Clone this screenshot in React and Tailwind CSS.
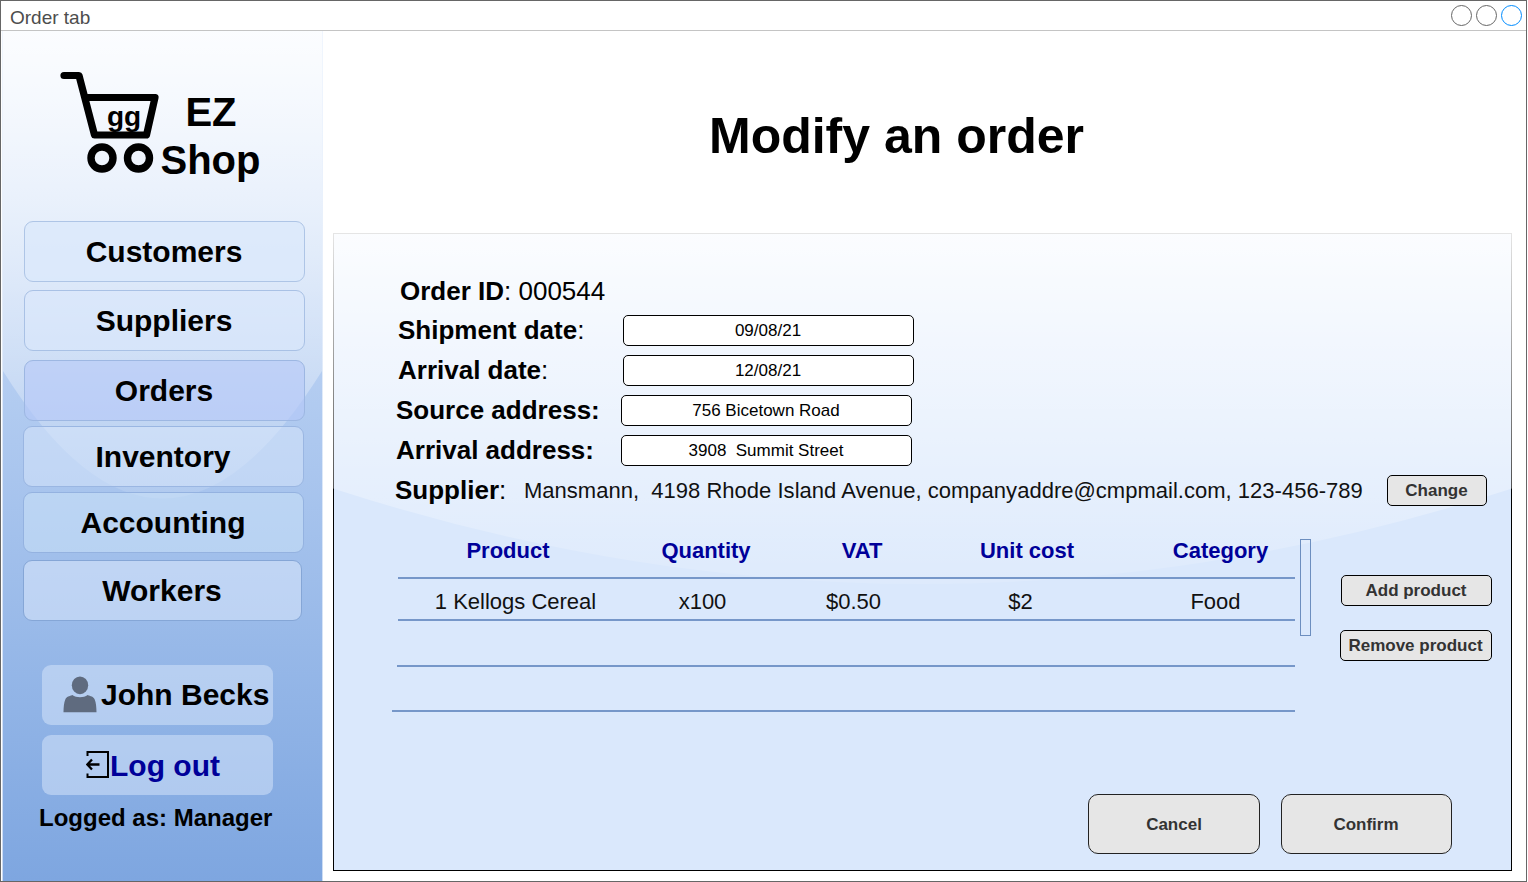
const NAV = [
  { label: "Customers", box: "ml-[21px] w-[281px] h-[61px] bg-[#dbe9fb]/80 border-[#aec5e6] pr-px" },
  { label: "Suppliers", box: "ml-[21px] w-[281px] h-[61px] mt-2 bg-[#dae8fc]/60 border-[#a9c1e5] pr-px" },
  { label: "Orders", box: "ml-[21px] w-[281px] h-[61px] mt-[9px] bg-[#b5c8f8]/60 border-[#9db7e2] pr-px" },
  { label: "Inventory", box: "ml-5 w-[281px] h-[61px] mt-[5px] bg-[#dae8fc]/50 border-[#9ab6e2] pr-px" },
  { label: "Accounting", box: "ml-5 w-[281px] h-[61px] mt-[5px] bg-[#d0e6fa]/50 border-[#94b2e0] pr-px" },
  { label: "Workers", box: "ml-5 w-[279px] h-[61px] mt-[7px] bg-[#dae8fc]/55 border-[#85a6d6] pr-px" },
];

const FIELDS = [
  { label: "Shipment date", colon: ":", value: "09/08/21", row: "pl-[64px]", labelBox: "w-[225px]" },
  { label: "Arrival date", colon: ":", value: "12/08/21", row: "pl-[64px]", labelBox: "w-[225px]" },
  { label: "Source address:", colon: "", value: "756 Bicetown Road", row: "pl-[62px]", labelBox: "w-[225px]" },
  { label: "Arrival address:", colon: "", value: "3908  Summit Street", row: "pl-[62px]", labelBox: "w-[225px]" },
];

const HEADERS = [
  { text: "Product", box: "w-[220px]" },
  { text: "Quantity", box: "w-[176px]" },
  { text: "VAT", box: "w-[136px]" },
  { text: "Unit cost", box: "w-[194px]" },
  { text: "Category", box: "w-[193px]" },
];

const CELLS = [
  { text: "1 Kellogs Cereal", box: "w-[235px]" },
  { text: "x100", box: "w-[139px]" },
  { text: "$0.50", box: "w-[163px]" },
  { text: "$2", box: "w-[171px]" },
  { text: "Food", box: "w-[219px]" },
];

function Glass({ id, d, viewBox, className }) {
  return (
    <svg className={className} viewBox={viewBox} preserveAspectRatio="none" aria-hidden="true">
      <defs>
        <linearGradient id={id} x1="0" y1="0" x2="0" y2="1">
          <stop offset="0" stopColor="#fff" stopOpacity="0.9" />
          <stop offset="1" stopColor="#fff" stopOpacity="0.1" />
        </linearGradient>
      </defs>
      <path d={d} fill={`url(#${id})`} />
    </svg>
  );
}

function Logo() {
  return (
    <div className="flex h-[190px] shrink-0 font-bold">
      <svg className="ml-[55px] mt-[39px] h-[110px] w-[104px] shrink-0" viewBox="58 70 104 110" fill="none">
        <path
          d="M64 75.5H79L94.5 135H146.5L155 97.5H86"
          stroke="#000"
          strokeWidth="7.2"
          strokeLinecap="round"
          strokeLinejoin="round"
        />
        <circle cx="102" cy="158" r="11" stroke="#000" strokeWidth="7.4" />
        <circle cx="138.5" cy="158" r="11" stroke="#000" strokeWidth="7.4" />
        <text x="107" y="126" fontSize="28" fontWeight="700" fill="#000">gg</text>
      </svg>
      <div className="-ml-[3px] mt-[57px] w-[103px] shrink-0 text-center text-[40px] leading-[48px]">
        <div className="pl-px">EZ</div>
        <div>Shop</div>
      </div>
    </div>
  );
}

function Sidebar() {
  return (
    <aside className="relative ml-px h-[850px] w-[321px] shrink-0 border-x border-white/60 bg-linear-to-b from-[#dae8fc] to-[#7ea6e0]">
      <Glass
        id="side-glass"
        className="absolute inset-0 h-full w-full"
        viewBox="0 0 320 851"
        d="M0 0V340.4Q160 595.7 320 340.4V0Z"
      />
      <div className="relative flex h-full flex-col">
        <Logo />
        {NAV.map((n) => (
          <button
            key={n.label}
            className={`${n.box} flex shrink-0 items-center justify-center rounded-[9px] border text-[30px] leading-none font-bold`}
          >
            {n.label}
          </button>
        ))}
        <button className="mt-11 ml-[39px] flex h-[60px] w-[231px] shrink-0 items-center rounded-[9px] bg-[#dae8fc]/50 pl-[21px] text-[30px] leading-none font-bold whitespace-nowrap">
          <svg className="-mt-[2px] h-[37px] w-[34px] shrink-0" viewBox="0 0 34 37" fill="#5f6b7f">
            <ellipse cx="17" cy="9.3" rx="8.2" ry="8.9" />
            <path d="M.5 36.3C.6 31 1 26.500 2.300 23.500C3.500 20.500 6.500 20.300 9.300 19C13.500 21.900 20.500 21.900 24.700 19C27.500 20.300 30.500 20.500 31.700 23.500C33 26.500 33.400 31 33.500 36.300Z" />
          </svg>
          <span className="ml-1">John Becks</span>
        </button>
        <button className="mt-[10px] ml-[39px] flex h-[60px] w-[231px] shrink-0 items-center rounded-[9px] bg-[#dae8fc]/50 pl-11 text-[30px] leading-none font-bold whitespace-nowrap text-[#000099]">
          <svg className="-mt-px h-[27px] w-[23px] shrink-0" viewBox="0 0 23 27" fill="none" stroke="#000" strokeWidth="2">
            <path d="M1.500 5V1H22V26H1.500V22.500" />
            <path d="M13.500 13.500H1.500M6 8.500L1.300 13.500L6 18.500" strokeWidth="2.3" />
          </svg>
          <span className="ml-[1px] pt-[2px]">Log out</span>
        </button>
        <p className="mt-[9px] ml-[36px] text-2xl leading-7 font-bold whitespace-nowrap">Logged as: Manager</p>
      </div>
    </aside>
  );
}

function SmallButton({ className, children }) {
  return (
    <button
      className={`${className} flex h-[31px] shrink-0 items-center justify-center rounded-[5px] border border-black bg-[#e6e6e6] pr-px text-[17px] leading-none font-bold whitespace-nowrap text-[#333]`}
    >
      {children}
    </button>
  );
}

function OrderPanel() {
  return (
    <section className="relative ml-[10px] flex h-[638px] w-[1179px] flex-col border border-black bg-[#dae8fc] pt-[37px]">
      <Glass
        id="panel-glass"
        className="absolute -top-px -left-px h-[638px] w-[1179px]"
        viewBox="0 0 1179 638"
        d="M0 0V255.500Q589.500 446.500 1179 255.500V0Z"
      />
      <div className="relative flex h-10 items-center pl-[66px] text-[26px] leading-none">
        <b>Order ID</b>: 000544
      </div>
      {FIELDS.map((f) => (
        <div key={f.label} className={`${f.row} relative flex h-10 items-center pb-px text-[26px] leading-none`}>
          <label className={`${f.labelBox} shrink-0 pb-[2px]`}>
            <b>{f.label}</b>
            {f.colon}
          </label>
          <div className="flex h-[31px] w-[291px] items-center justify-center rounded-[5px] border border-black bg-white pr-px text-[17px] whitespace-pre">
            {f.value}
          </div>
        </div>
      ))}
      <div className="relative flex h-10 items-center pb-px pl-[61px] text-[26px] leading-none">
        <div className="w-[129px] shrink-0 pb-[2px]">
          <b>Supplier</b>:
        </div>
        <div className="w-[863px] shrink-0 text-[22px] tracking-[0.015px] whitespace-pre text-[#111]">
          {"Mansmann,  4198 Rhode Island Avenue, companyaddre@cmpmail.com, 123-456-789"}
        </div>
        <SmallButton className="w-[100px]">Change</SmallButton>
      </div>

      <div className="relative flex text-[22px] leading-none">
        <div className="w-[961px] shrink-0 pt-[18px] pl-[58px]">
          <div className="ml-[6px] flex h-[50px] items-center border-b-2 border-[#7697c9] pb-[4px] font-bold text-[#000099]">
            {HEADERS.map((h) => (
              <div key={h.text} className={`${h.box} shrink-0 text-center`}>{h.text}</div>
            ))}
          </div>
          <div className="ml-[6px] flex h-[42px] items-center border-b-2 border-[#7697c9] pt-1.5 text-[#111]">
            {CELLS.map((c) => (
              <div key={c.text} className={`${c.box} shrink-0 text-center`}>{c.text}</div>
            ))}
          </div>
          <div className="ml-[5px] h-[46px] border-b-2 border-[#7697c9]" />
          <div className="h-[45px] border-b-2 border-[#7697c9]" />
        </div>
        <div className="mt-[28px] ml-[5px] h-[97px] w-[11px] shrink-0 border border-[#6c8ebf]" />
        <div className="mt-16 ml-[29px] flex flex-col items-end gap-6">
          <SmallButton className="w-[151px]">Add product</SmallButton>
          <SmallButton className="w-[152px]">Remove product</SmallButton>
        </div>
      </div>

      <div className="relative mt-[82px] ml-[754px] flex gap-[21px] text-[17px] leading-none font-bold text-[#333]">
        <button className="h-[60px] w-[172px] rounded-[10px] border border-[#222] bg-[#e6e6e6]">Cancel</button>
        <button className="h-[60px] w-[171px] rounded-[10px] border border-[#222] bg-[#e6e6e6] pr-px">Confirm</button>
      </div>
    </section>
  );
}

export default function App() {
  return (
    <div className="h-[882px] w-[1528px] overflow-hidden bg-white font-['Liberation_Sans',Arial,sans-serif] text-black">
      <div className="flex h-[882px] w-[1527px] flex-col border border-[#666]">
        <header className="flex h-[30px] shrink-0 items-center justify-between border-b border-[#c4c4c4] pr-1 pl-[9px]">
          <span className="pt-[3px] text-[19px] leading-none text-[#4d4d4d]">Order tab</span>
          <div className="flex gap-1">
            <span className="h-[21px] w-[21px] rounded-full border border-[#666]" />
            <span className="h-[21px] w-[21px] rounded-full border border-[#666]" />
            <span className="h-[21px] w-[21px] rounded-full border border-[#008cff]" />
          </div>
        </header>
        <div className="flex min-h-0 flex-1">
          <Sidebar />
          <main className="flex flex-col">
            <h1 className="flex h-[202px] shrink-0 items-center justify-center pt-2 pr-[42px] text-[50px] leading-none font-bold">
              Modify an order
            </h1>
            <OrderPanel />
          </main>
        </div>
      </div>
    </div>
  );
}
